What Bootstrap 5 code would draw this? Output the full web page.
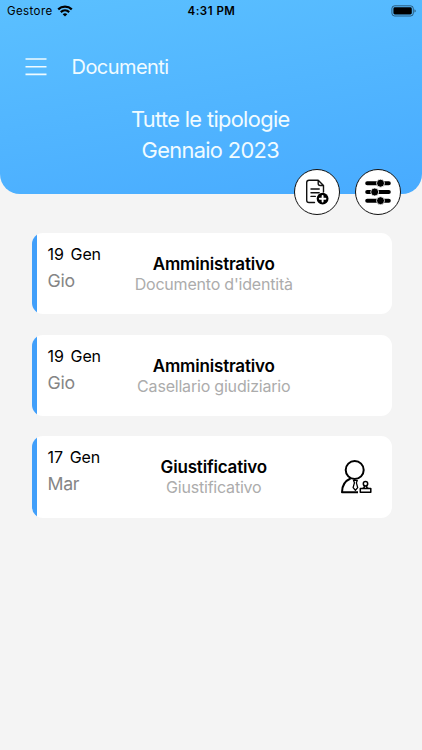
<!DOCTYPE html>
<html lang="it">
<head>
<meta charset="utf-8">
<meta name="viewport" content="width=device-width, initial-scale=1">
<title>Documenti</title>
<link href="https://cdn.jsdelivr.net/npm/bootstrap@5.3.0/dist/css/bootstrap.min.css" rel="stylesheet">
<style>
  body { background: #f4f4f4; font-family: Inter, "Liberation Sans", sans-serif; height: 750px; overflow: hidden; color: #000; }
  .hero { height: 193.5px; border-radius: 0 0 20px 20px; background: linear-gradient(170deg, #5bc0ff 0%, #48abff 100%); }
  .status-bar { height: 22px; font-size: 11.5px; line-height: 22px; padding: 0 6px 0 7px; }
  .status-bar .carrier { letter-spacing: .4px; }
  .status-bar .clock { font-weight: 600; letter-spacing: .5px; }
  .status-bar > * { flex: 1 1 0; }
  .status-bar svg { display: block; }
  .title-bar { height: 30px; margin-top: 30px; padding-left: 25px; gap: 24.5px; color: #f0fbff; }
  .title-bar h1 { font-size: 20px; font-weight: 400; line-height: 30px; letter-spacing: -.55px; }
  .summary { margin-top: 22px; padding-right: 1.5px; font-size: 21.8px; line-height: 31px; letter-spacing: -.65px; color: #f0fbff; }
  .round-actions { right: 20.7px; top: 169px; gap: 15px; }
  .round-btn { width: 46px; height: 46px; border: 1.3px solid #111; background: #fff; }
  .docs { padding: 39.5px 30px 0 32px; gap: 20.4px; }
  .doc { height: 81.3px; border-radius: 11px; background: #fff; }
  .doc-edge { width: 5px; background: #419ffa; }
  .doc-date { width: 80px; padding: 10px 0 0 10.5px; }
  .doc-day { font-size: 16px; line-height: 22px; word-spacing: 2.5px; letter-spacing: -.12px; }
  .doc-week { font-size: 17.7px; line-height: 24px; margin-top: 4px; color: #858585; letter-spacing: -.3px; }
  .doc-type { padding-top: 20px; }
  .doc-name { font-size: 17px; font-weight: 600; line-height: 22px; letter-spacing: -.18px; }
  .doc-kind { font-size: 16px; line-height: 18px; color: #acacac; letter-spacing: -.2px; white-space: nowrap; }
  .doc-icon { width: 81.5px; padding-right: 20px; }
</style>
<script src="https://cdn.jsdelivr.net/npm/bootstrap@5.3.0/dist/js/bootstrap.bundle.min.js"></script>
</head>
<body class="position-relative">
<header class="hero">
  <div class="status-bar d-flex align-items-center">
    <div class="d-flex align-items-center gap-1">
      <span class="carrier">Gestore</span>
      <svg width="16" height="12" viewBox="0 0 16 12" fill="none" stroke="#000" stroke-width="2.2"><path d="M1.2 4.4C5 .8 11 .8 14.8 4.4M3.8 7.1c2.4-2.2 6-2.2 8.4 0"/><path d="M8 11.5 5.7 9.2c1.3-1.2 3.3-1.2 4.6 0z" fill="#000" stroke="none"/></svg>
    </div>
    <div class="clock text-center">4:31 PM</div>
    <div class="d-flex justify-content-end">
      <svg width="25" height="12" viewBox="0 0 25 12"><rect x=".9" y=".8" width="21.4" height="10.2" rx="2.8" fill="none" stroke="#000" stroke-opacity=".5"/><rect x="2.4" y="2.3" width="18.4" height="7.2" rx="1.4"/><path d="M23.5 4.2q1.2.5 1.2 1.7t-1.2 1.7z" opacity=".55"/></svg>
    </div>
  </div>
  <div class="title-bar d-flex align-items-center">
    <svg width="22" height="18" viewBox="0 0 22 18" stroke="#f0fbff" stroke-width="1.6"><path d="M.5 1h21M.5 8.8h21M.5 16.4h21"/></svg>
    <h1 class="m-0">Documenti</h1>
  </div>
  <div class="summary text-center">Tutte le tipologie<br>Gennaio 2023</div>
</header>

<div class="round-actions position-absolute d-flex">
  <button class="round-btn rounded-circle p-0 d-flex align-items-center justify-content-center" aria-label="Nuovo documento">
    <svg width="24" height="26" viewBox="0 0 24 26" fill="none" stroke="#111" stroke-width="1.4" stroke-linecap="round" stroke-linejoin="round"><path d="M9.5 23.5H4Q1.7 23.5 1.7 21.200V3.500Q1.700 1.200 4 1.200h9.200l5.300 5.300V13M13.200 1.200v3.300q0 2 2 2h3.300M6 10h8.200M6 13.700h8.200M6 17.400h4.300"/><circle cx="17.600" cy="19.700" r="5.900" fill="#000" stroke="none"/><path d="M17.600 16.900v5.600M14.800 19.700h5.600" stroke="#fff" stroke-width="1.900"/></svg>
  </button>
  <button class="round-btn rounded-circle p-0 d-flex align-items-center justify-content-center" aria-label="Filtri">
    <svg width="26" height="26" viewBox="0 0 26 26"><path d="M2.200 4.200h21.600M2.200 13h21.600M2.200 21.700h21.600" stroke="#000" stroke-width="4" stroke-linecap="round"/><g stroke="#fff" stroke-width=".8"><circle cx="15.500" cy="4.200" r="4"/><circle cx="9.700" cy="13" r="4"/><circle cx="15.500" cy="21.700" r="4"/></g></svg>
  </button>
</div>

<main class="docs d-flex flex-column">
  <article class="doc d-flex overflow-hidden">
    <div class="doc-edge"></div>
    <div class="doc-date"><div class="doc-day">19 Gen</div><div class="doc-week">Gio</div></div>
    <div class="doc-type flex-grow-1 text-center"><div class="doc-name">Amministrativo</div><div class="doc-kind">Documento d'identità</div></div>
    <div class="doc-icon"></div>
  </article>
  <article class="doc d-flex overflow-hidden">
    <div class="doc-edge"></div>
    <div class="doc-date"><div class="doc-day">19 Gen</div><div class="doc-week">Gio</div></div>
    <div class="doc-type flex-grow-1 text-center"><div class="doc-name">Amministrativo</div><div class="doc-kind">Casellario giudiziario</div></div>
    <div class="doc-icon"></div>
  </article>
  <article class="doc d-flex overflow-hidden">
    <div class="doc-edge"></div>
    <div class="doc-date"><div class="doc-day">17 Gen</div><div class="doc-week">Mar</div></div>
    <div class="doc-type flex-grow-1 text-center"><div class="doc-name">Giustificativo</div><div class="doc-kind">Giustificativo</div></div>
    <div class="doc-icon d-flex align-items-center justify-content-end">
      <svg width="32" height="34" viewBox="0 0 32 34" fill="none" stroke="#000" stroke-width="2" stroke-linejoin="round"><circle cx="14.700" cy="10" r="9"/><path d="M18 32.200H2c0-7 3.500-11.500 8.500-13.700"/><path d="M13.500 20.300h3.800l-.9 2.500 1.300 4.800-2.300 2.600-2.300-2.600 1.300-4.800z" stroke-width="1.300"/><circle cx="25.500" cy="23.700" r="2.200" stroke-width="1.500"/><path d="M24.500 25.900q0 2-2.200 2.500h6.400q-2.200-.5-2.200-2.500M20.300 32.200v-3.600h10.500v3.600z" stroke-width="1.500"/></svg>
    </div>
  </article>
</main>
</body>
</html>
